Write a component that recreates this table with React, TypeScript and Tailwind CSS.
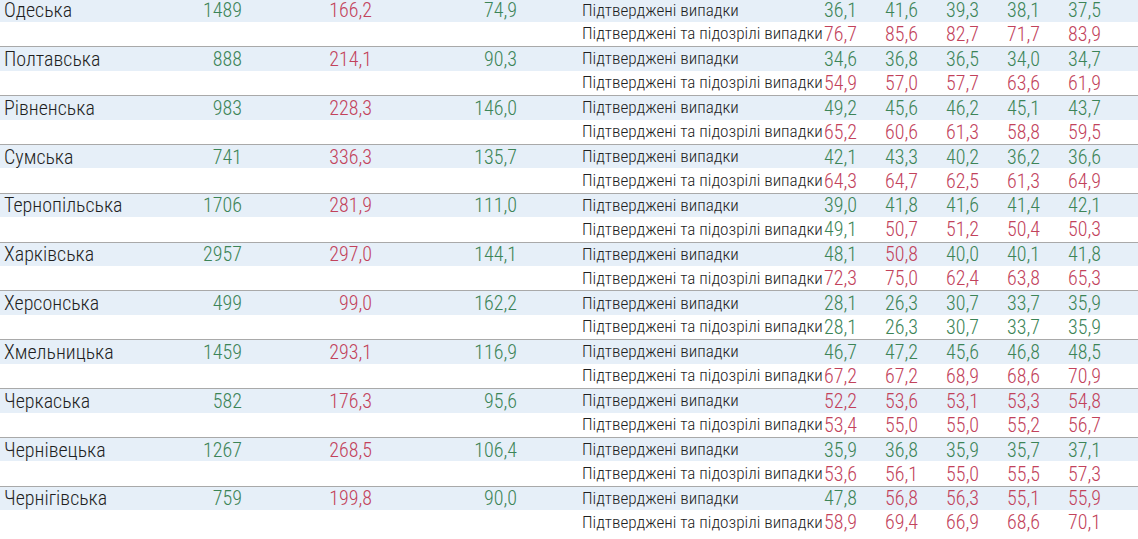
import React from "react";

type Row = { name: string; n: string; r: string; c: string; a: string[]; b: string[] };

const rows: Row[] = [
  { name: "Одеська", n: "1489", r: "166,2", c: "74,9", a: ["36,1", "41,6", "39,3", "38,1", "37,5"], b: ["76,7", "85,6", "82,7", "71,7", "83,9"] },
  { name: "Полтавська", n: "888", r: "214,1", c: "90,3", a: ["34,6", "36,8", "36,5", "34,0", "34,7"], b: ["54,9", "57,0", "57,7", "63,6", "61,9"] },
  { name: "Рівненська", n: "983", r: "228,3", c: "146,0", a: ["49,2", "45,6", "46,2", "45,1", "43,7"], b: ["65,2", "60,6", "61,3", "58,8", "59,5"] },
  { name: "Сумська", n: "741", r: "336,3", c: "135,7", a: ["42,1", "43,3", "40,2", "36,2", "36,6"], b: ["64,3", "64,7", "62,5", "61,3", "64,9"] },
  { name: "Тернопільська", n: "1706", r: "281,9", c: "111,0", a: ["39,0", "41,8", "41,6", "41,4", "42,1"], b: ["49,1", "50,7", "51,2", "50,4", "50,3"] },
  { name: "Харківська", n: "2957", r: "297,0", c: "144,1", a: ["48,1", "50,8", "40,0", "40,1", "41,8"], b: ["72,3", "75,0", "62,4", "63,8", "65,3"] },
  { name: "Херсонська", n: "499", r: "99,0", c: "162,2", a: ["28,1", "26,3", "30,7", "33,7", "35,9"], b: ["28,1", "26,3", "30,7", "33,7", "35,9"] },
  { name: "Хмельницька", n: "1459", r: "293,1", c: "116,9", a: ["46,7", "47,2", "45,6", "46,8", "48,5"], b: ["67,2", "67,2", "68,9", "68,6", "70,9"] },
  { name: "Черкаська", n: "582", r: "176,3", c: "95,6", a: ["52,2", "53,6", "53,1", "53,3", "54,8"], b: ["53,4", "55,0", "55,0", "55,2", "56,7"] },
  { name: "Чернівецька", n: "1267", r: "268,5", c: "106,4", a: ["35,9", "36,8", "35,9", "35,7", "37,1"], b: ["53,6", "56,1", "55,0", "55,5", "57,3"] },
  { name: "Чернігівська", n: "759", r: "199,8", c: "90,0", a: ["47,8", "56,8", "56,3", "55,1", "55,9"], b: ["58,9", "69,4", "66,9", "68,6", "70,1"] },
];

const isRed = (v: string) => parseFloat(v.replace(",", ".")) >= 50;

const GREEN = "text-[#3c8457]";
const RED = "text-[#c2425b]";

function Nums({ vals }: { vals: string[] }) {
  return (
    <>
      {vals.map((v, i) => (
        <div
          key={i}
          className={"text-right text-[20px] font-stretch-[80%] font-light " + (isRed(v) ? RED : GREEN)}
        >
          {v}
        </div>
      ))}
    </>
  );
}

const grid =
  "grid grid-cols-[180px_62px_130px_145px_65px_214px_61px_61px_61px_61px_61px_1fr] items-center";

export default function App() {
  return (
    <div
      className="w-[1138px] h-[539px] overflow-hidden bg-white text-[#1f1f1f]"
      style={{ fontFamily: "Roboto, 'Noto Sans', sans-serif" }}
    >
      <div className="-mt-[2.6px]">
        {rows.map((row) => (
          <div key={row.name} className="border-t-[1.5px] border-[#a9a9a9]">
            <div className={grid + " h-[23.5px] bg-[#e6eff8] leading-none"}>
              <div className="pl-[4px] text-[20px] font-stretch-[80%] font-light whitespace-nowrap">{row.name}</div>
              <div className={"text-right text-[20px] font-stretch-[80%] font-light " + GREEN}>{row.n}</div>
              <div className={"text-right text-[20px] font-stretch-[80%] font-light " + RED}>{row.r}</div>
              <div className={"text-right text-[20px] font-stretch-[80%] font-light " + GREEN}>{row.c}</div>
              <div />
              <div className="text-[17.2px] font-stretch-[80%] font-light whitespace-nowrap">Підтверджені випадки</div>
              <Nums vals={row.a} />
              <div />
            </div>
            <div className={grid + " h-[24.33px] bg-white leading-none"}>
              <div />
              <div />
              <div />
              <div />
              <div />
              <div className="text-[17.2px] font-stretch-[80%] font-light whitespace-nowrap">Підтверджені та підозрілі випадки</div>
              <Nums vals={row.b} />
              <div />
            </div>
          </div>
        ))}
      </div>
    </div>
  );
}
